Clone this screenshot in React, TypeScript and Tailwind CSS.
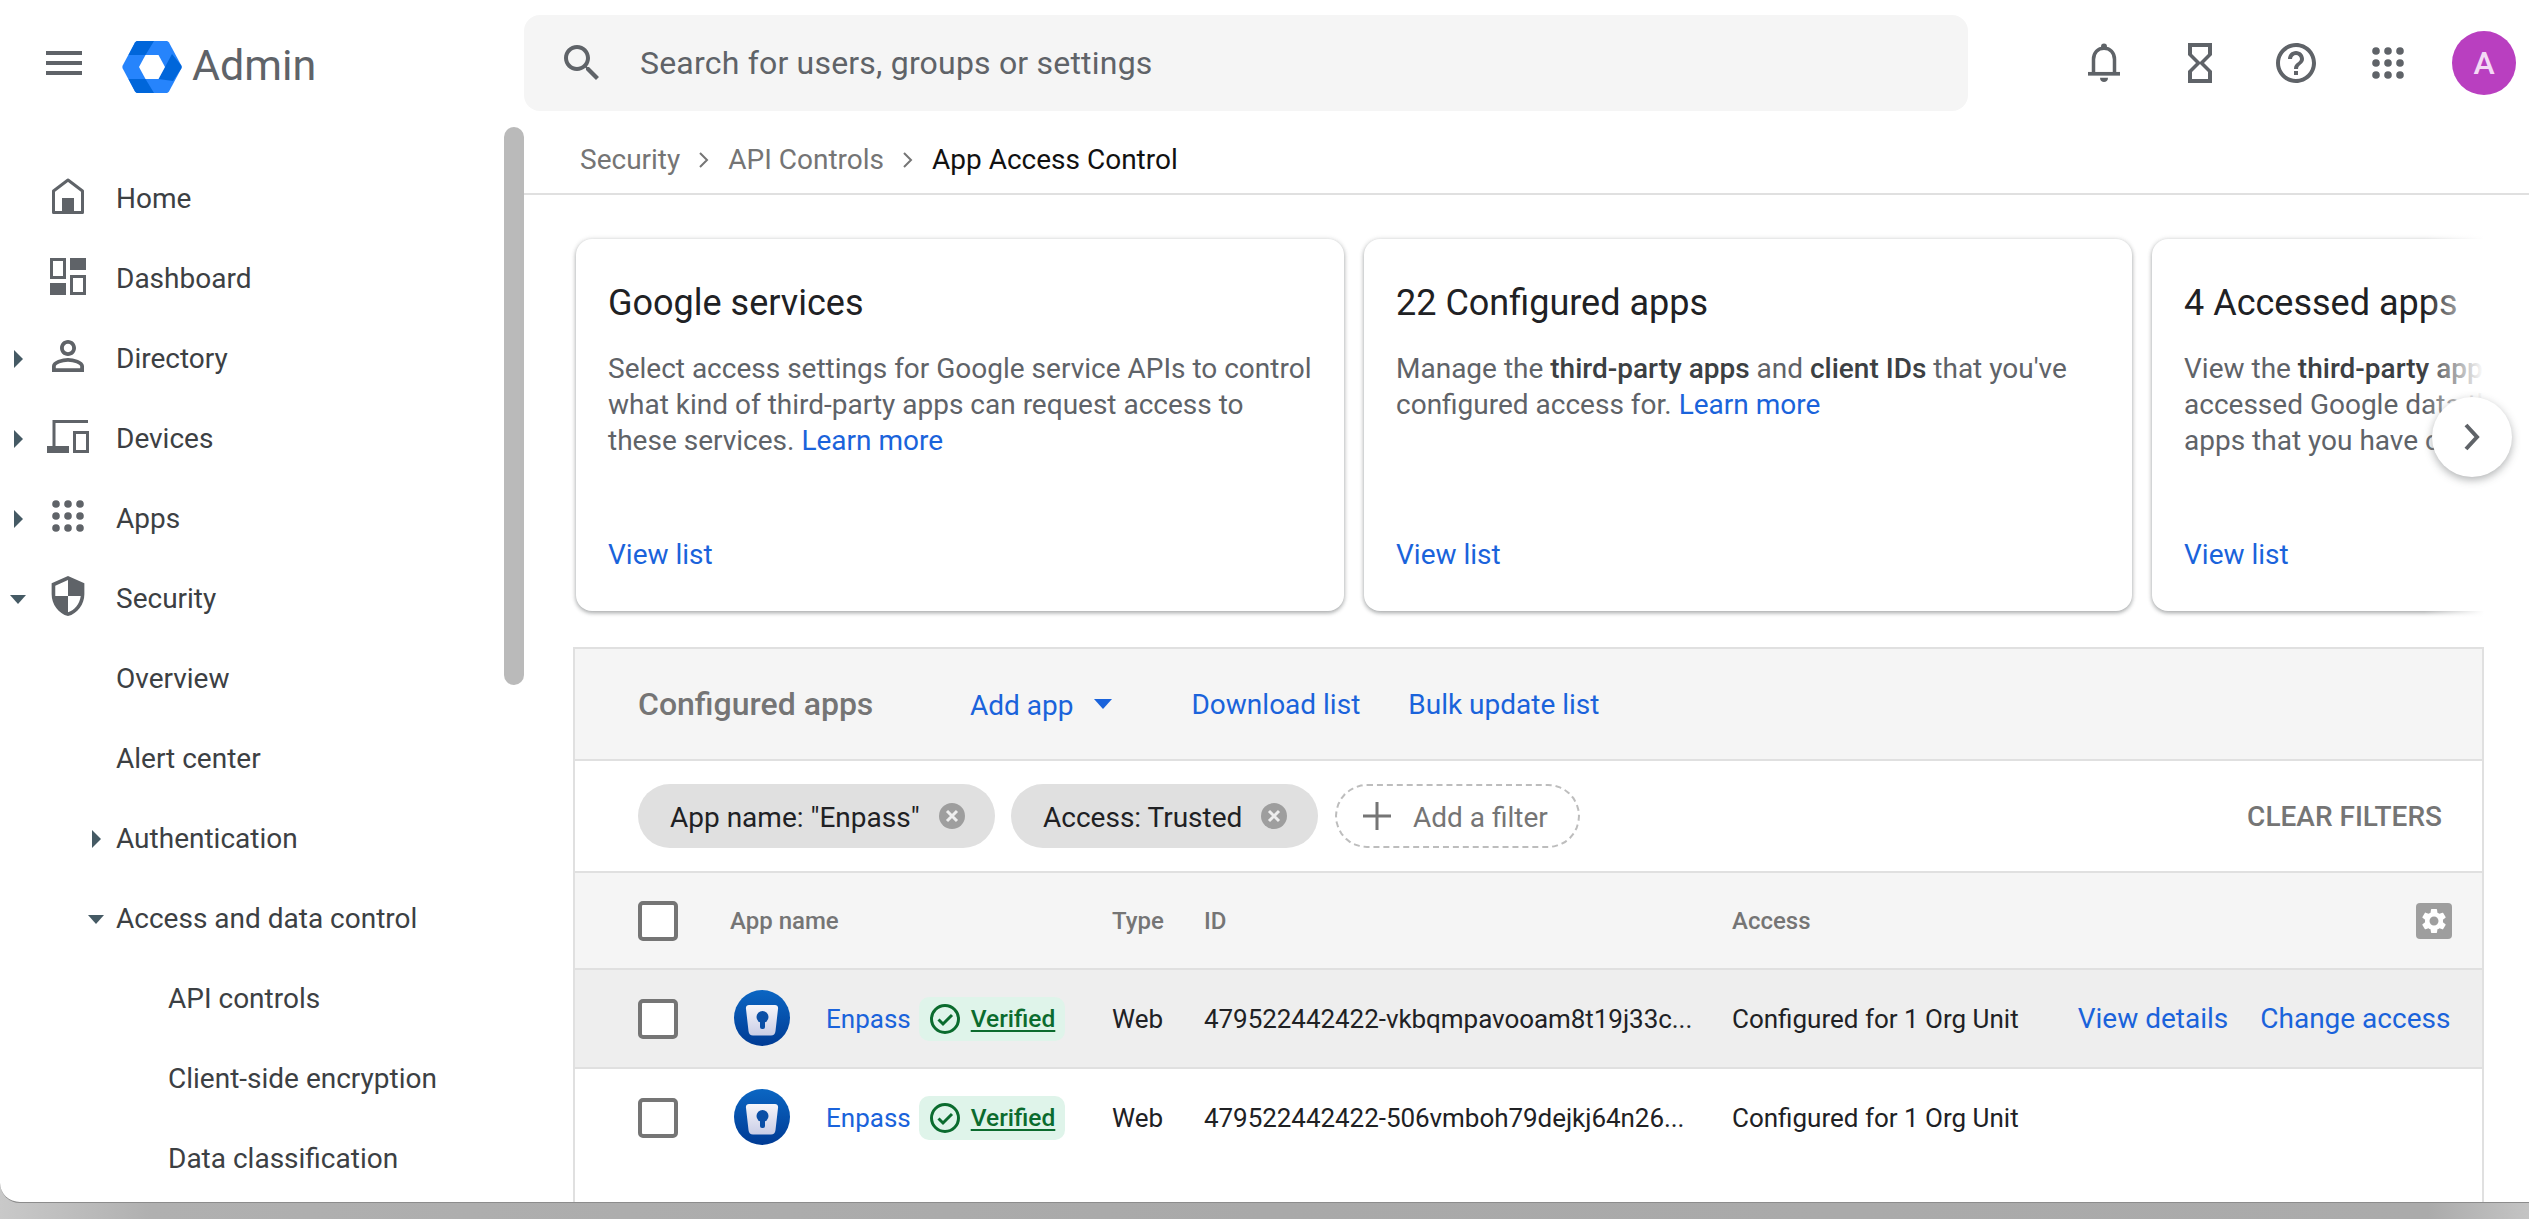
import React from "react";

const G = "#5f6368";

function TriRight() {
  return (
    <svg width="9" height="18" viewBox="0 0 9 18" className="block">
      <path d="M0 0L9 9L0 18Z" fill="#455a64" />
    </svg>
  );
}
function TriDown() {
  return (
    <svg width="16" height="9" viewBox="0 0 16 9" className="block">
      <path d="M0 0H16L8 9Z" fill="#455a64" />
    </svg>
  );
}

function IconHome() {
  return (
    <svg width="32" height="36" viewBox="0 0 32 36" fill="none" className="block">
      <path d="M1.5 34.5V13L16 2L30.500 13V34.500Z" stroke={G} strokeWidth="3" strokeLinejoin="round" />
      <rect x="10" y="20" width="12" height="15" fill={G} />
    </svg>
  );
}
function IconDashboard() {
  return (
    <svg width="36" height="37" viewBox="0 0 36 37" fill="none" className="block">
      <rect x="1.500" y="1.500" width="13" height="18" stroke={G} strokeWidth="3" />
      <rect x="20" y="0" width="16" height="12" fill={G} />
      <rect x="0" y="25" width="16" height="12" fill={G} />
      <rect x="21.500" y="18.500" width="13" height="17" stroke={G} strokeWidth="3" />
    </svg>
  );
}
function IconPerson() {
  return (
    <svg width="32" height="32" viewBox="4 4 16 16" className="block">
      <path fill={G} d="M12 5.900c1.160 0 2.100.94 2.100 2.100s-.94 2.100-2.100 2.100S9.900 9.160 9.900 8s.94-2.100 2.100-2.100m0 9c2.970 0 6.100 1.460 6.100 2.100v1.100H5.900V17c0-.64 3.130-2.100 6.100-2.100M12 4C9.790 4 8 5.790 8 8s1.790 4 4 4 4-1.790 4-4-1.790-4-4-4zm0 9c-2.670 0-8 1.340-8 4v3h16v-3c0-2.660-5.330-4-8-4z" />
    </svg>
  );
}
function IconDevices() {
  return (
    <svg width="42" height="33" viewBox="0 0 42 33" fill="none" className="block">
      <path d="M41 1.500H7V27" stroke={G} strokeWidth="3" />
      <rect x="0" y="26" width="22" height="7" fill={G} />
      <rect x="27.500" y="12.500" width="13" height="19" stroke={G} strokeWidth="3" />
    </svg>
  );
}
function Dots({ size, fill }: { size: number; fill: string }) {
  const c = [4, 16, 28];
  return (
    <svg width={size} height={size} viewBox="0 0 32 32" className="block">
      {c.map((y) => c.map((x) => <circle key={`${x}-${y}`} cx={x} cy={y} r="3.800" fill={fill} />))}
    </svg>
  );
}
function IconShield() {
  return (
    <svg width="34" height="40" viewBox="3 1 18 22" className="block">
      <path fill={G} d="M12 1L3 5v6c0 5.550 3.840 10.740 9 12 5.160-1.260 9-6.450 9-12V5l-9-4zm0 10.990h7c-.53 4.120-3.280 7.790-7 8.940V12H5V6.300l7-3.110v8.800z" />
    </svg>
  );
}

function NavRow({ arrow, arrowDown, icon, label }: { arrow?: boolean; arrowDown?: boolean; icon: React.ReactNode; label: string }) {
  return (
    <div className="flex h-[80px] items-center">
      <div className="flex w-[36px] justify-center">
        {arrow ? <TriRight /> : null}
        {arrowDown ? <TriDown /> : null}
      </div>
      <div className="-mt-[6px] flex w-[64px] justify-center">{icon}</div>
      <span className="ml-[16px]">{label}</span>
    </div>
  );
}

function EnpassIcon({ id }: { id: string }) {
  return (
    <svg width="56" height="57" viewBox="0 0 56 57" className="block shrink-0">
      <defs>
        <linearGradient id={id} x1="0" y1="0" x2="0" y2="1">
          <stop offset="0" stopColor="#0b66c3" />
          <stop offset="1" stopColor="#003b94" />
        </linearGradient>
        <linearGradient id={`${id}b`} x1="0" y1="0" x2="0" y2="1">
          <stop offset="0" stopColor="#f6f6fa" />
          <stop offset="1" stopColor="#c9cde6" />
        </linearGradient>
      </defs>
      <circle cx="28" cy="28" r="28" fill={`url(#${id})`} />
      <path d="M15 15H41C43 15 44.500 16.500 44 19L41.500 41C41.200 44 39.500 45.500 37 45.500H19C16.500 45.500 14.800 44 14.500 41L12 19C11.500 16.500 13 15 15 15Z" fill={`url(#${id}b)`} />
      <circle cx="28.500" cy="27" r="6" fill="#0a4fa6" />
      <rect x="26" y="27" width="5" height="12" rx="2" fill="#0a4fa6" />
    </svg>
  );
}

function Verified() {
  return (
    <div className="ml-[8px] flex h-[44px] w-[146px] shrink-0 items-center rounded-[10px] bg-[#dff4ea] pl-[11px]">
      <svg width="30" height="30" viewBox="0 0 30 30" fill="none" className="block shrink-0">
        <circle cx="15" cy="15" r="13.500" stroke="#0b6b2e" strokeWidth="3" />
        <path d="M8.500 15.500L13 20L22 11" stroke="#0b6b2e" strokeWidth="3" />
      </svg>
      <span className="ml-[11px] text-[24.5px] font-medium leading-[30px] text-[#0b6b2e] underline decoration-[2px] underline-offset-[3px]">Verified</span>
    </div>
  );
}

function Check() {
  return <div className="h-[40px] w-[40px] shrink-0 rounded-[5px] border-[4px] border-[#757575] bg-white" />;
}

function ChipX() {
  return (
    <svg width="26" height="26" viewBox="0 0 26 26" className="block shrink-0">
      <circle cx="13" cy="13" r="13" fill="#9e9e9e" />
      <path d="M8 8L18 18M18 8L8 18" stroke="#eee" strokeWidth="3" />
    </svg>
  );
}

function Card({ title, children }: { title: string; children: React.ReactNode }) {
  return (
    <div className="flex h-[372px] w-[768px] shrink-0 flex-col rounded-[16px] bg-white pb-[38px] pl-[32px] pt-[42px] shadow-[0_2px_4px_rgba(60,64,67,0.4),0_0_5px_rgba(60,64,67,0.15)]">
      <div className="text-[36px] leading-[44px] text-[#202124]">{title}</div>
      <div className="mt-[26px] flex-1 whitespace-nowrap text-[#5f6368]">{children}</div>
      <div className="text-[#1a63db]">View list</div>
    </div>
  );
}

export default function App() {
  return (
    <div className="h-[1219px] w-[2529px] overflow-hidden whitespace-nowrap bg-[linear-gradient(90deg,#c9c9c9_0%,#b0b0b0_6%,#a9a9a9_50%,#ababab_96%,#c4c4c4_100%)] font-['Roboto',sans-serif] text-[28px] leading-[36px]">
      <div className="flex h-[1203px] overflow-hidden rounded-bl-[20px] border-b border-[#8c8c8c] bg-white">
        {/* Sidebar */}
        <aside className="relative w-[524px] shrink-0 text-[#3c4043]">
          <div className="flex h-[159px] items-start pt-[41px]">
            <svg width="36" height="24" viewBox="0 0 36 24" className="ml-[46px] mt-[10px] block">
              <rect y="0" width="36" height="4" fill={G} />
              <rect y="10" width="36" height="4" fill={G} />
              <rect y="20" width="36" height="4" fill={G} />
            </svg>
            <svg width="60" height="52" viewBox="0 0 60 52" className="ml-[40px] block">
              <path d="M16 0H44C45.500 0 46.500 .6 47 1.500L59.300 24.500C59.800 25.500 59.800 26.500 59.300 27.500L47 50.500C46.500 51.400 45.500 52 44 52H16C14.500 52 13.500 51.400 13 50.500L.7 27.500C.2 26.500 .2 25.500 .7 24.500L13 1.500C13.500 .6 14.500 0 16 0Z" fill="#2684fc" />
              <path d="M16 0H32L23.500 14H6.500L13 1.500C13.500 .6 14.500 0 16 0Z" fill="#0066da" />
              <path d="M43 26L50 13L59.300 24.500C59.800 25.500 59.800 26.500 59.300 27.500L51 40L36.500 38Z" fill="#0066da" />
              <path d="M6.500 38H23.500L32 52H16C14.500 52 13.500 51.400 13 50.500Z" fill="#0066da" />
              <path d="M23.500 14H36.500L43 26L36.500 38H23.500L17 26Z" fill="#fff" />
            </svg>
            <span className="ml-[10px] mt-[-2px] text-[43px] leading-[52px] text-[#5f6368]">Admin</span>
          </div>
          <nav>
            <NavRow label="Home" icon={<IconHome />} />
            <NavRow label="Dashboard" icon={<IconDashboard />} />
            <NavRow arrow label="Directory" icon={<IconPerson />} />
            <NavRow arrow label="Devices" icon={<IconDevices />} />
            <NavRow arrow label="Apps" icon={<Dots size={32} fill={G} />} />
            <NavRow arrowDown label="Security" icon={<IconShield />} />
            <div className="flex h-[80px] items-center pl-[116px]">Overview</div>
            <div className="flex h-[80px] items-center pl-[116px]">Alert center</div>
            <div className="flex h-[80px] items-center pl-[92px]">
              <TriRight />
              <span className="ml-[15px]">Authentication</span>
            </div>
            <div className="flex h-[80px] items-center pl-[88px]">
              <TriDown />
              <span className="ml-[12px]">Access and data control</span>
            </div>
            <div className="flex h-[80px] items-center pl-[168px]">API controls</div>
            <div className="flex h-[80px] items-center pl-[168px]">Client-side encryption</div>
            <div className="flex h-[80px] items-center pl-[168px]">Data classification</div>
          </nav>
          <div className="absolute right-0 top-[127px] h-[558px] w-[20px] rounded-[10px] bg-[#bababa]" />
        </aside>

        {/* Main */}
        <main className="flex min-w-0 flex-1 flex-col">
          <div className="flex h-[125px] items-start pt-[15px]">
            <div className="flex h-[96px] w-[1444px] items-center rounded-[16px] bg-[#f5f5f5] pl-[40px]">
              <svg width="36" height="36" viewBox="3 3 18 18" className="block">
                <path fill={G} d="M15.500 14h-.79l-.28-.27C15.410 12.590 16 11.110 16 9.500 16 5.910 13.090 3 9.500 3S3 5.910 3 9.500 5.910 16 9.500 16c1.610 0 3.090-.59 4.230-1.570l.27.28v.79l5 4.990L20.490 19l-4.990-5zm-6 0C7.010 14 5 11.990 5 9.500S7.010 5 9.500 5 14 7.010 14 9.500 11.990 14 9.500 14z" />
              </svg>
              <span className="ml-[40px] text-[32px] leading-[40px] tracking-[0.2px] text-[#5f6368]">Search for users, groups or settings</span>
            </div>
            <svg width="32" height="40" viewBox="0 0 32 38" preserveAspectRatio="none" fill="none" className="ml-[120px] mt-[28px] block">
              <circle cx="16" cy="3.500" r="3" fill={G} />
              <path d="M5.500 29V15.500C5.500 9 10 5 16 5S26.500 9 26.500 15.500V29" stroke={G} strokeWidth="3.500" />
              <rect x="0" y="27.500" width="32" height="3.500" fill={G} />
              <path d="M12 33H20C20 38.500 12 38.500 12 33Z" fill={G} />
            </svg>
            <svg width="24" height="40" viewBox="6 2 12 20" preserveAspectRatio="none" className="ml-[68px] mt-[28px] block">
              <path fill={G} d="M6 2v6h.01L6 8.010 10 12l-4 4 .01.01H6V22h12v-5.990h-.01L18 16l-4-4 4-3.990-.01-.01H18V2H6zm10 14.500V20H8v-3.500l4-4 4 4zm-4-5l-4-4V4h8v3.500l-4 4z" />
            </svg>
            <svg width="40" height="40" viewBox="2 2 20 20" className="ml-[64px] mt-[28px] block">
              <path fill={G} d="M11 18h2v-2h-2v2zm1-16C6.480 2 2 6.480 2 12s4.480 10 10 10 10-4.480 10-10S17.520 2 12 2zm0 18c-4.410 0-8-3.590-8-8s3.590-8 8-8 8 3.590 8 8-3.590 8-8 8zm0-14c-2.210 0-4 1.790-4 4h2c0-1.100.9-2 2-2s2 .9 2 2c0 2-3 1.750-3 5h2c0-2.250 3-2.500 3-5 0-2.210-1.790-4-4-4z" />
            </svg>
            <div className="ml-[56px] mt-[32px]">
              <Dots size={32} fill={G} />
            </div>
            <div className="ml-[48px] mt-[16px] flex h-[64px] w-[64px] items-center justify-center rounded-full bg-[#b93fc0] text-[32px] font-medium text-[#f3d9f5]">A</div>
          </div>

          <div className="flex h-[70px] items-center border-b-2 border-[#e0e0e0] pl-[56px] pt-[2px]">
            <span className="text-[#757575]">Security</span>
            <svg width="12" height="20" viewBox="0 0 12 20" fill="none" className="ml-[18px] block">
              <path d="M2 3L9 10L2 17" stroke="#757575" strokeWidth="2" />
            </svg>
            <span className="ml-[18px] text-[#757575]">API Controls</span>
            <svg width="12" height="20" viewBox="0 0 12 20" fill="none" className="ml-[18px] block">
              <path d="M2 3L9 10L2 17" stroke="#757575" strokeWidth="2" />
            </svg>
            <span className="ml-[18px] text-[#111]">App Access Control</span>
          </div>

          <div className="relative mt-[32px]">
            <div className="w-[1960px] overflow-hidden">
              <div className="flex gap-[20px] py-[12px] pl-[52px]">
                <Card title="Google services">
                  Select access settings for Google service APIs to control
                  <br />
                  what kind of third-party apps can request access to
                  <br />
                  these services. <span className="text-[#1a63db]">Learn more</span>
                </Card>
                <Card title="22 Configured apps">
                  Manage the <b className="font-medium text-[#3c4043]">third-party apps</b> and <b className="font-medium text-[#3c4043]">client IDs</b> that you've
                  <br />
                  configured access for. <span className="text-[#1a63db]">Learn more</span>
                </Card>
                <Card title="4 Accessed apps">
                  View the <b className="font-medium text-[#3c4043]">third-party apps</b> that have
                  <br />
                  accessed Google data through OAuth, including
                  <br />
                  apps that you have configured
                </Card>
              </div>
            </div>
            <div className="absolute bottom-0 left-[1900px] top-0 w-[60px] bg-gradient-to-r from-transparent to-white" />
            <div className="absolute left-[1908px] top-[170px] flex h-[80px] w-[80px] items-center justify-center rounded-full bg-white shadow-[0_3px_8px_rgba(60,64,67,0.4)]">
              <svg width="20" height="30" viewBox="0 0 20 30" fill="none" className="block">
                <path d="M4 3L15 15L4 27" stroke="#5f6368" strokeWidth="4" />
              </svg>
            </div>
          </div>

          {/* Table */}
          <section className="ml-[49px] mt-[24px] flex w-[1911px] flex-1 flex-col border-x-2 border-t-2 border-[#e0e0e0]">
            <div className="flex h-[112px] items-center border-b-2 border-[#e0e0e0] bg-[#f5f5f5] pl-[63px]">
              <span className="w-[332px] text-[32px] font-medium text-[#757575]">Configured apps</span>
              <span className="pt-[4px] text-[#1a63db]">Add app</span>
              <svg width="18" height="10" viewBox="0 0 18 10" className="ml-[21px] block">
                <path d="M0 0H18L9 10Z" fill="#1a63db" />
              </svg>
              <span className="ml-[79px] pt-[2px] text-[#1a63db]">Download list</span>
              <span className="ml-[48px] pt-[2px] text-[#1a63db]">Bulk update list</span>
            </div>

            <div className="flex h-[112px] items-center border-b-2 border-[#e0e0e0] pl-[63px] pr-[40px]">
              <div className="flex h-[64px] w-[357px] shrink-0 items-center rounded-full bg-[#e0e0e0] pl-[32px]">
                <span className="pt-[3px] text-[#202124]">App name: "Enpass"</span>
                <span className="ml-[19px]"><ChipX /></span>
              </div>
              <div className="ml-[16px] flex h-[64px] w-[307px] shrink-0 items-center rounded-full bg-[#e0e0e0] pl-[32px]">
                <span className="pt-[3px] text-[#202124]">Access: Trusted</span>
                <span className="ml-[19px]"><ChipX /></span>
              </div>
              <div className="ml-[17px] flex h-[64px] w-[245px] shrink-0 items-center rounded-full border-2 border-dashed border-[#bdbdbd] pl-[26px]">
                <svg width="28" height="28" viewBox="0 0 28 28" className="block">
                  <path d="M0 14H28M14 0V28" stroke="#757575" strokeWidth="3" />
                </svg>
                <span className="ml-[22px] pt-[3px] text-[#757575]">Add a filter</span>
              </div>
              <span className="ml-auto pt-[2px] text-[28px] font-medium text-[#757575]">CLEAR FILTERS</span>
            </div>

            <div className="flex h-[97px] items-center border-b-2 border-[#e0e0e0] bg-[#f5f5f5] pl-[63px] pr-[30px] text-[24px] font-medium text-[#757575]">
              <div className="w-[92px] shrink-0"><Check /></div>
              <span className="w-[382px] shrink-0">App name</span>
              <span className="w-[92px] shrink-0">Type</span>
              <span className="w-[528px] shrink-0">ID</span>
              <span>Access</span>
              <span className="ml-auto block h-[36px] w-[36px] rounded-[4px] bg-[#9e9e9e] p-[3px]">
                <svg viewBox="0 0 24 24" className="block h-[30px] w-[30px]">
                  <path fill="#fff" d="M19.140 12.940c.04-.3.06-.61.06-.94 0-.32-.02-.64-.07-.94l2.030-1.580c.18-.14.23-.41.12-.61l-1.920-3.320c-.12-.22-.37-.29-.59-.22l-2.390.96c-.5-.38-1.030-.7-1.620-.94l-.36-2.540c-.04-.24-.24-.41-.48-.41h-3.840c-.24 0-.43.17-.47.41l-.36 2.540c-.59.24-1.130.57-1.620.94l-2.390-.96c-.22-.08-.47 0-.59.22L2.740 8.870c-.12.21-.08.47.12.61l2.030 1.580c-.05.3-.09.63-.09.94s.02.64.07.94l-2.030 1.580c-.18.14-.23.41-.12.61l1.920 3.320c.12.22.37.29.59.22l2.390-.96c.5.38 1.030.7 1.620.94l.36 2.540c.05.24.24.41.48.41h3.840c.24 0 .44-.17.47-.41l.36-2.540c.59-.24 1.130-.56 1.620-.94l2.390.96c.22.08.47 0 .59-.22l1.920-3.320c.12-.22.07-.47-.12-.61l-2.010-1.580zM12 15.600c-1.980 0-3.600-1.620-3.600-3.600s1.620-3.600 3.600-3.600 3.600 1.620 3.600 3.600-1.620 3.600-3.600 3.600z" />
                </svg>
              </span>
            </div>

            <div className="flex h-[99px] items-center border-b-2 border-[#e0e0e0] bg-[#eeeeee] pl-[63px] text-[26px] text-[#202124]">
              <div className="w-[92px] shrink-0"><Check /></div>
              <div className="flex w-[382px] shrink-0 items-center pl-[4px]">
                <EnpassIcon id="en1" />
                <span className="ml-[36px] text-[#1a63db]">Enpass</span>
                <Verified />
              </div>
              <span className="w-[92px] shrink-0">Web</span>
              <span className="w-[528px] shrink-0 tracking-[-0.05px]">479522442422-vkbqmpavooam8t19j33c...</span>
              <span>Configured for 1 Org Unit</span>
              <span className="ml-[59px] text-[28px] text-[#1a63db]">View details</span>
              <span className="ml-[32px] text-[28px] text-[#1a63db]">Change access</span>
            </div>

            <div className="flex h-[97px] items-center pl-[63px] text-[26px] text-[#202124]">
              <div className="w-[92px] shrink-0"><Check /></div>
              <div className="flex w-[382px] shrink-0 items-center pl-[4px]">
                <EnpassIcon id="en2" />
                <span className="ml-[36px] text-[#1a63db]">Enpass</span>
                <Verified />
              </div>
              <span className="w-[92px] shrink-0">Web</span>
              <span className="w-[528px] shrink-0 tracking-[-0.05px]">479522442422-506vmboh79dejkj64n26...</span>
              <span>Configured for 1 Org Unit</span>
            </div>
          </section>
        </main>
      </div>
    </div>
  );
}
